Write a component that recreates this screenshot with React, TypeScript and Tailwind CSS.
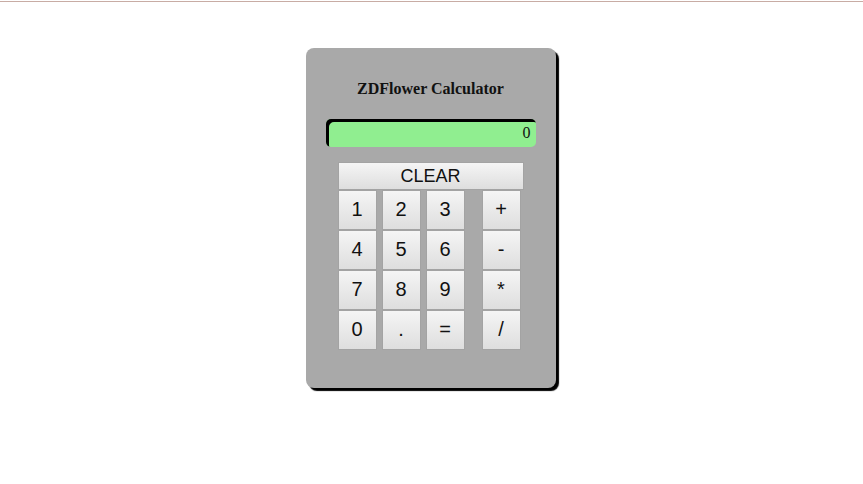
const digitRows = [
  ['1', '2', '3', '+'],
  ['4', '5', '6', '-'],
  ['7', '8', '9', '*'],
  ['0', '.', '=', '/'],
];

const btn =
  'h-[40px] w-[39px] pb-[3px] border border-[#a3a3a3] bg-gradient-to-b from-[#f5f5f5] to-[#dedede] text-[20px] text-[#111] [font-family:"Liberation_Sans",Arial,sans-serif] flex items-center justify-center';

export default function App() {
  return (
    <div className="min-h-screen bg-white">
      <div className="pt-px">
        <div className="h-px bg-[#c8aca4]" />
      </div>

      <div className="flex justify-center pt-[46px] pr-[2px]">
        <div className="w-[250px] h-[340px] rounded-[8px] bg-[#a9a9a9] shadow-[3px_3px_1px_#000] flex flex-col items-center">
          <h3 className="mt-[29px] text-[16px] font-bold text-[#111] [font-family:'Liberation_Serif',serif]">
            ZDFlower Calculator
          </h3>

          <div className="mt-[18px] w-[210px] h-[28px] rounded-[5px] bg-[#90ee90] shadow-[inset_3px_3px_0_#000] flex items-center justify-end pr-[5px] text-[16px] text-[#111] [font-family:'Liberation_Serif',serif]">
            0
          </div>

          <div className="mt-[15px] w-[186px] flex flex-col">
            <button className="h-[28px] w-[186px] border border-[#a3a3a3] bg-gradient-to-b from-[#f5f5f5] to-[#dedede] text-[18px] text-[#111] [font-family:'Liberation_Sans',Arial,sans-serif] flex items-center justify-center">
              CLEAR
            </button>
            <div className="flex flex-col">
              {digitRows.map((row, i) => (
                <div key={i} className="flex">
                  <button className={btn}>{row[0]}</button>
                  <button className={btn + ' ml-[5px]'}>{row[1]}</button>
                  <button className={btn + ' ml-[5px]'}>{row[2]}</button>
                  <button className={btn + ' ml-[17px]'}>{row[3]}</button>
                </div>
              ))}
            </div>
          </div>
        </div>
      </div>
    </div>
  );
}
